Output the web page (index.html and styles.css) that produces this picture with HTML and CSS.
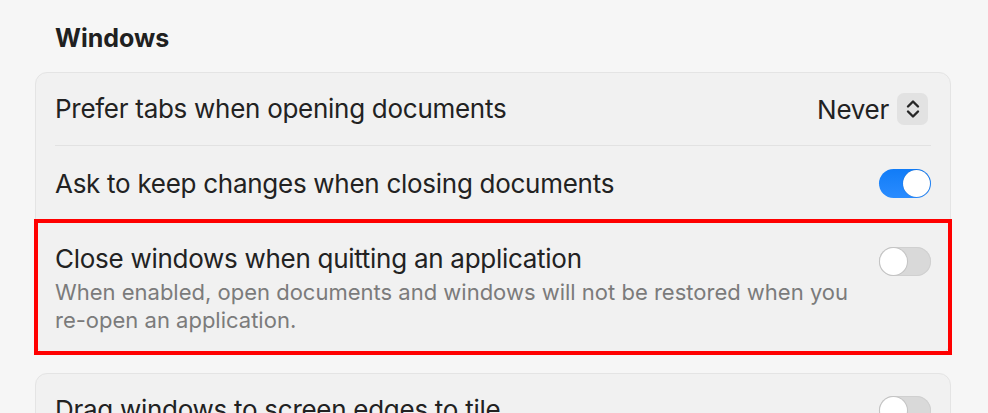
FILE: index.html
```html
<!DOCTYPE html>
<html lang="en">
<head>
  <meta charset="UTF-8" />
  <title>Desktop &amp; Dock</title>
  <link rel="stylesheet" href="styles.css">
</head>
<body>
  <main class="pane">
    <h2 class="group-title">Windows</h2>

    <section class="card">
      <div class="row">
        <div class="row-inner">
          <span class="label">Prefer tabs when opening documents</span>
          <div class="popup">
            <span>Never</span>
            <span class="stepper">
              <svg width="16" height="22" viewBox="0 0 16 22">
                <path d="M3 8.5 L8 3.5 L13 8.5 M3 13.5 L8 18.5 L13 13.5" fill="none" stroke="#262626" stroke-width="2.4" stroke-linecap="round" stroke-linejoin="round"/>
              </svg>
            </span>
          </div>
        </div>
      </div>
      <div class="row">
        <div class="row-inner divided">
          <span class="label">Ask to keep changes when closing documents</span>
          <span class="switch on"></span>
        </div>
      </div>
      <div class="row highlighted">
        <div class="row-inner divided top">
          <div class="text">
            <div class="label">Close windows when quitting an application</div>
            <div class="desc">When enabled, open documents and windows will not be restored when you re-open an application.</div>
          </div>
          <span class="switch"></span>
        </div>
      </div>
    </section>

    <section class="card">
      <div class="row">
        <div class="row-inner">
          <span class="label">Drag windows to screen edges to tile</span>
          <span class="switch"></span>
        </div>
      </div>
    </section>
  </main>
</body>
</html>
```

FILE: styles.css
```css
body {
  margin: 0;
  background: #f6f6f6;
  font-family: Inter, "Noto Sans", sans-serif;
  color: #222222;
  overflow: hidden;
}
.pane {
  padding: 21px 37px 0 35px;
}
.group-title {
  margin: 0 0 17px 20px;
  font-size: 25px;
  line-height: 34px;
  font-weight: 700;
  color: #202020;
}
.card {
  background: #f1f1f1;
  border: 1px solid #e4e4e4;
  border-radius: 12px;
  margin-bottom: 19px;
}
.row {
  padding: 0 19px 0 19px;
}
.row-inner {
  display: flex;
  align-items: center;
  justify-content: space-between;
  height: 72px;
}
.row-inner.divided {
  border-top: 1px solid #e2e2e2;
  height: 75px;
}
.row-inner.top {
  height: auto;
  align-items: flex-start;
  padding: 21px 0 19px;
}
.label {
  font-size: 26px;
  line-height: 32px;
  letter-spacing: -0.28px;
}
.desc {
  margin-top: 3px;
  font-size: 22px;
  line-height: 28px;
  color: #7b7b7b;
  max-width: 805px;
}
.highlighted {
  outline: 4px solid #ff0000;
  outline-offset: -2px;
}
.popup {
  display: flex;
  align-items: center;
  gap: 8px;
  font-size: 26px;
  letter-spacing: -0.28px;
  margin-right: 3px;
}
.stepper {
  display: flex;
  align-items: center;
  justify-content: center;
  width: 31px;
  height: 32px;
  border-radius: 7px;
  background: #e2e2e2;
}
.switch {
  position: relative;
  flex: none;
  width: 52px;
  height: 29px;
  border-radius: 15px;
  background: #d9d9d9;
  box-shadow: inset 0 0 0 1px #d0d0d0;
}
.switch::after {
  content: "";
  position: absolute;
  top: 1px;
  left: 1px;
  width: 27px;
  height: 27px;
  border-radius: 50%;
  background: #ffffff;
  box-shadow: 0 0 0 1px #c4c4c4;
}
.switch.on {
  background: linear-gradient(#117cf7, #2a8cff);
  box-shadow: none;
}
.switch.on::after {
  left: auto;
  right: 1px;
  box-shadow: 0 0 1px rgba(0, 0, 0, 0.3);
}
.row-inner.top .switch {
  margin-top: 4px;
}
```
